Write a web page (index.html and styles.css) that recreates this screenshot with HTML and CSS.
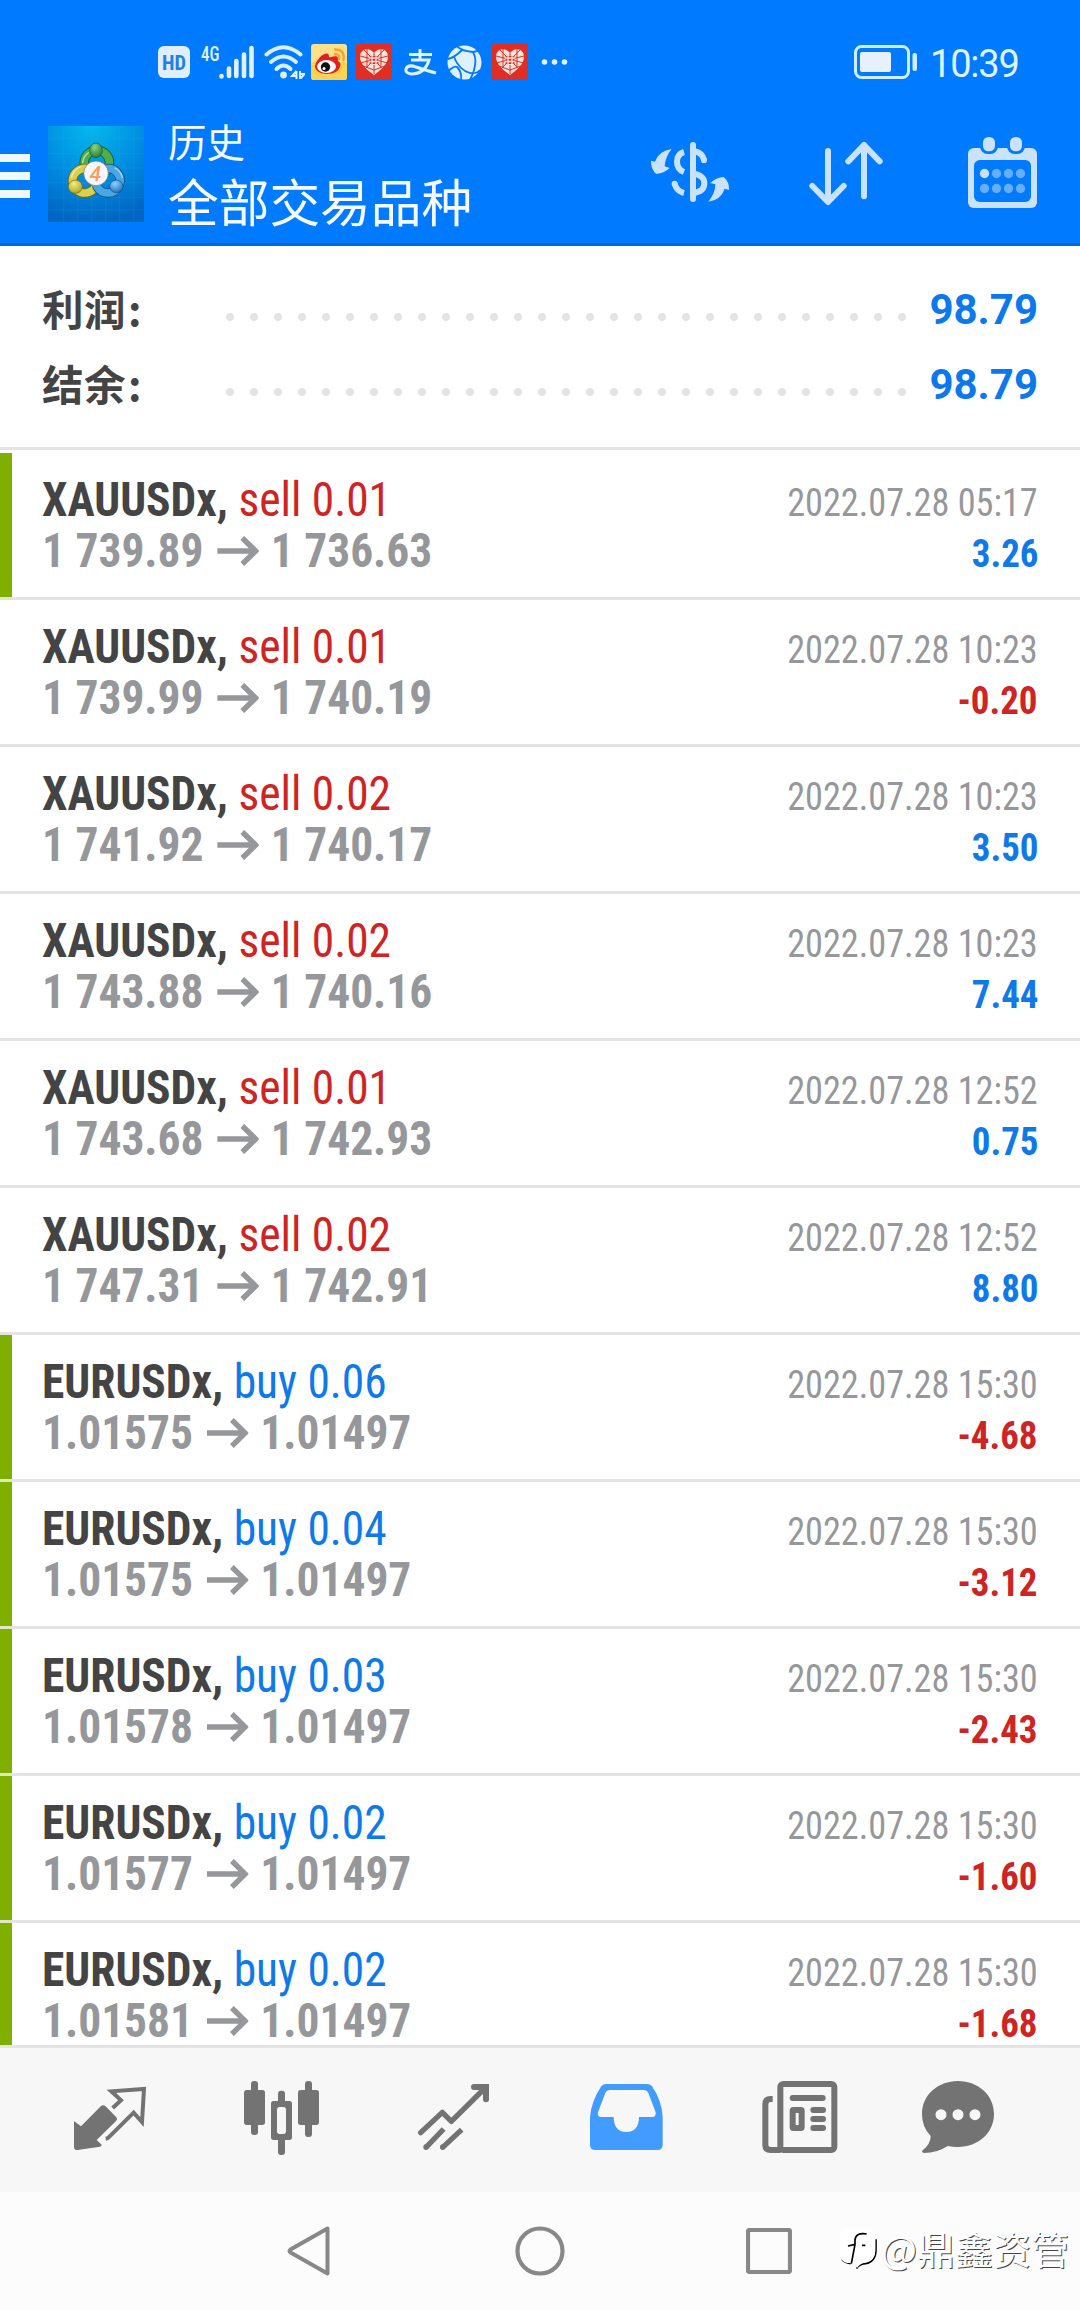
FILE: index.html
```html
<!DOCTYPE html>
<html lang="zh-CN">
<head>
<meta charset="utf-8">
<title>历史</title>
<link rel="stylesheet" href="styles.css">
</head>
<body>
<svg class="defs" width="0" height="0">
  <symbol id="arrow" viewBox="0 0 44 30"><path d="M0 15H40M26.500 2L40.500 15L26.500 28" fill="none" stroke="currentColor" stroke-width="5.700"/></symbol>
  <symbol id="heart" viewBox="0 0 36 36">
    <rect width="36" height="36" rx="2" fill="#e02e24"/>
    <path d="M18 31C11 26 4 20 4 13C4 4 14 3 18 9C22 3 32 4 32 13C32 20 25 26 18 31Z" fill="#fbe3dc"/>
    <path d="M4 12L32 19M32 12L4 19M8 6L27 25M28 6L9 25M11 5V24M25 5V24M18 9V14M18 21V30M7 22L18 26L29 22" fill="none" stroke="#e02e24" stroke-width="1"/>
    <rect x="13.500" y="12" width="9" height="8" fill="#e02e24"/>
    <path d="M13 14H23M13 17.500H23M16 11V20M20 11V20" stroke="#fbe3dc" stroke-width="1.300"/>
  </symbol>
</svg>
<div class="screen">
  <header class="header">
    <div class="status">
      <svg class="st-hd" viewBox="0 0 32 32"><rect width="32" height="32" rx="6" fill="#e0efff"/><text x="16" y="23.500" textLength="24" lengthAdjust="spacingAndGlyphs">HD</text></svg>
      <svg class="st-net" viewBox="0 0 54 34"><text x="0" y="15.500" textLength="18.500" lengthAdjust="spacingAndGlyphs">4G</text><path d="M20.500 31.500v-.5M28 31V23.500M35.300 31V16M43 31V9.500M50.500 31V3" fill="none" stroke="#e0f2ff" stroke-width="4.600" stroke-linecap="round"/></svg>
      <svg class="st-wifi" viewBox="0 0 41 34"><g fill="none" stroke="#d6efff" stroke-width="4" stroke-linecap="round"><path d="M2.500 9.500Q19.500-5 36.500 9.500"/><path d="M7 17Q19.500 6 32 17"/><path d="M12.500 24Q19.500 17 26.500 24"/></g><circle cx="19.500" cy="30" r="3.400" fill="#e0f2ff"/><path d="M32.500 26V34M32.500 26L28 31H33M36 26V34L40.500 29H35" fill="none" stroke="#e0f2ff" stroke-width="2"/></svg>
      <svg class="st-weibo" viewBox="0 0 36 36"><rect width="36" height="36" rx="3" fill="#ffe08a"/><rect y="18" width="36" height="18" rx="3" fill="#ffd34d"/><path d="M4 22C6 14 14 8 17 10C19 12 17 14 20 13C26 11 28 13 27 17C31 19 30 24 25 28C17 32 4 30 4 22Z" fill="#e31f21"/><ellipse cx="15.500" cy="22.500" rx="9.500" ry="6.500" fill="#fff"/><circle cx="14.500" cy="23" r="4.700" fill="#111"/><circle cx="13" cy="24.500" r="1.500" fill="#fff"/><path d="M24 10Q29 10 28 15M24 5.500Q34 5 32.500 16" fill="none" stroke="#f5a531" stroke-width="2.500" stroke-linecap="round"/></svg>
      <svg class="st-heart"><use href="#heart"/></svg>
      <svg class="st-ali" viewBox="0 0 34 28"><path d="M5 6.500H28M16 1V12M7 12H25Q21 26 7 26Q1 25 2 21Q4 16 12 19Q24 23 32 25" fill="none" stroke="#e0f2ff" stroke-width="3"/></svg>
      <svg class="st-globe" viewBox="0 0 35 35"><circle cx="17.500" cy="17.500" r="17" fill="#dff0ff"/><path d="M9 0Q13 6 26 7Q30 7 35 4M15 5Q7 13 1 14M7 12Q12 25 23 28Q30 29 33 25M26 7Q32 17 23 35M0 27Q8 20 10 22Q15 27 14 35" fill="none" stroke="#007aff" stroke-width="1.800"/></svg>
      <svg class="st-heart2"><use href="#heart"/></svg>
      <svg class="st-more" viewBox="0 0 28 6"><g fill="#e0f2ff"><circle cx="3.500" cy="3" r="2.800"/><circle cx="13.500" cy="3" r="2.800"/><circle cx="23.500" cy="3" r="2.800"/></g></svg>
      <svg class="st-batt" viewBox="0 0 64 34"><rect x="1.500" y="1.500" width="53" height="31" rx="6" fill="none" stroke="#cdeeff" stroke-width="3"/><rect x="6" y="7" width="31" height="20" rx="2" fill="#e6f0ff"/><rect x="58.500" y="8" width="4.500" height="18" rx="2" fill="#cdeeff"/></svg>
      <span class="clock">10:39</span>
    </div>
    <div class="appbar">
      <div class="menu"><i></i><i></i><i></i></div>
      <svg class="logo" viewBox="9 12 288 288">
        <defs>
          <radialGradient id="sky" cx=".45" cy="0" r="1"><stop offset="0" stop-color="#04b8ee"/><stop offset=".55" stop-color="#008ce0"/><stop offset="1" stop-color="#0066c2"/></radialGradient>
          <radialGradient id="g" cx=".4" cy=".3" r=".8"><stop offset="0" stop-color="#8fd08a"/><stop offset="1" stop-color="#18781f"/></radialGradient>
          <radialGradient id="y" cx=".4" cy=".3" r=".8"><stop offset="0" stop-color="#f4ee80"/><stop offset="1" stop-color="#a89a16"/></radialGradient>
          <radialGradient id="b" cx=".4" cy=".3" r=".8"><stop offset="0" stop-color="#8fd2fb"/><stop offset="1" stop-color="#1667ae"/></radialGradient>
        </defs>
        <rect x="9" y="12" width="288" height="288" fill="url(#sky)"/>
        <path d="M56 12V300M98 12V300M140 12V300M182 12V300M224 12V300M266 12V300M9 50H297M9 94H297M9 138H297M9 182H297M9 226H297M9 264H297" stroke="#3fb4f0" stroke-opacity=".22" stroke-width="2"/>
        <g fill="none" stroke-linecap="round">
          <path d="M129 150A38 38 0 1 1 184 148" stroke="#155f2a" stroke-width="28"/>
          <path d="M129 150A38 38 0 1 1 184 148" stroke="#4fae4a" stroke-width="23"/>
          <path d="M120 139A37 37 0 1 0 152 194" stroke="#6e6a19" stroke-width="28"/>
          <path d="M120 139A37 37 0 1 0 152 194" stroke="#d9d14b" stroke-width="23"/>
          <path d="M190 139A37 37 0 1 1 156 194" stroke="#104f86" stroke-width="28"/>
          <path d="M190 139A37 37 0 1 1 156 194" stroke="#49a7e4" stroke-width="23"/>
          <path d="M113 122A42 42 0 0 1 130 92M80 165A42 42 0 0 1 106 135M232 166A42 42 0 0 0 210 138" stroke="#fff" stroke-opacity=".6" stroke-width="4"/>
        </g>
        <ellipse cx="153" cy="85" rx="19" ry="22" fill="url(#g)" stroke="#155f2a" stroke-width="2"/>
        <ellipse cx="91" cy="194" rx="21" ry="20" fill="url(#y)" stroke="#6e6a19" stroke-width="2"/>
        <ellipse cx="214" cy="193" rx="20" ry="19" fill="url(#b)" stroke="#104f86" stroke-width="2"/>
        <circle cx="153" cy="154" r="37" fill="#f6f6fa" stroke="#6b6a60" stroke-width="2"/>
        <text x="151" y="177" class="logo-num">4</text>
      </svg>
      <div class="titles"><div class="sub">历史</div><div class="main">全部交易品种</div></div>
      <svg class="ic-dollar" viewBox="90 90 240 204" fill="#c9e2ff">
        <path d="M155 117Q117 122 105 155L93 152Q92 178 109 192Q132 190 149 174L134 169Q136 140 155 117Z"/>
        <path d="M265 275Q303 270 314 236L327 240Q329 217 311 201Q288 203 271 219L286 223Q286 250 265 275Z"/>
        <g fill="none" stroke="#c9e2ff" stroke-width="18"><path d="M219 105V267" stroke-linecap="round"/><path d="M192 126Q171 132 171 155Q171 178 192 186M164 221Q170 243 192 249"/><path d="M164 221V222M252 151V150" stroke-linecap="round"/><path d="M222 123Q248 128 252 151M222 191Q253 197 253 220Q253 244 222 249"/></g>
      </svg>
      <svg class="ic-sort" viewBox="564 90 231 204" fill="none" stroke="#c9e2ff" stroke-width="18" stroke-linecap="round" stroke-linejoin="round"><path d="M624 123V275M577 228L624 276L671 228M732 259V105M685 154L732 105L779 154"/></svg>
      <svg class="ic-cal" viewBox="1041 78 213 228">
        <rect x="1044" y="114" width="207" height="180" rx="17" fill="#c9e2ff"/>
        <rect x="1080" y="72" width="54" height="60" rx="23" fill="#007aff"/><rect x="1161" y="72" width="54" height="60" rx="23" fill="#007aff"/>
        <rect x="1089" y="81" width="36" height="43" rx="16" fill="#c9e2ff"/><rect x="1170" y="81" width="36" height="43" rx="16" fill="#c9e2ff"/>
        <rect x="1062" y="150" width="171" height="126" rx="17" fill="#007aff"/>
        <circle cx="1093.500" cy="190.500" r="14" fill="#c9e2ff"/>
        <g fill="#66afff"><circle cx="1129.500" cy="190.500" r="14"/><circle cx="1165.500" cy="190.500" r="14"/><circle cx="1201.500" cy="190.500" r="14"/><circle cx="1093.500" cy="235.500" r="14"/><circle cx="1129.500" cy="235.500" r="14"/><circle cx="1165.500" cy="235.500" r="14"/><circle cx="1201.500" cy="235.500" r="14"/></g>
      </svg>
    </div>
  </header>

  <section class="summary">
    <div class="sum-row"><span class="label">利润<span class="colon">:</span></span><span class="dots"></span><span class="total">98.79</span></div>
    <div class="sum-row"><span class="label">结余<span class="colon">:</span></span><span class="dots"></span><span class="total">98.79</span></div>
  </section>

  <main class="list">
    <div class="deal marked"><div class="line"><div class="name"><b>XAUUSDx,</b> <span class="sell">sell 0.01</span></div><time>2022.07.28 05:17</time></div><div class="line"><div class="price">1 739.89<svg><use href="#arrow"/></svg>1 736.63</div><span class="pl up">3.26</span></div></div>
    <div class="deal"><div class="line"><div class="name"><b>XAUUSDx,</b> <span class="sell">sell 0.01</span></div><time>2022.07.28 10:23</time></div><div class="line"><div class="price">1 739.99<svg><use href="#arrow"/></svg>1 740.19</div><span class="pl down">-0.20</span></div></div>
    <div class="deal"><div class="line"><div class="name"><b>XAUUSDx,</b> <span class="sell">sell 0.02</span></div><time>2022.07.28 10:23</time></div><div class="line"><div class="price">1 741.92<svg><use href="#arrow"/></svg>1 740.17</div><span class="pl up">3.50</span></div></div>
    <div class="deal"><div class="line"><div class="name"><b>XAUUSDx,</b> <span class="sell">sell 0.02</span></div><time>2022.07.28 10:23</time></div><div class="line"><div class="price">1 743.88<svg><use href="#arrow"/></svg>1 740.16</div><span class="pl up">7.44</span></div></div>
    <div class="deal"><div class="line"><div class="name"><b>XAUUSDx,</b> <span class="sell">sell 0.01</span></div><time>2022.07.28 12:52</time></div><div class="line"><div class="price">1 743.68<svg><use href="#arrow"/></svg>1 742.93</div><span class="pl up">0.75</span></div></div>
    <div class="deal"><div class="line"><div class="name"><b>XAUUSDx,</b> <span class="sell">sell 0.02</span></div><time>2022.07.28 12:52</time></div><div class="line"><div class="price">1 747.31<svg><use href="#arrow"/></svg>1 742.91</div><span class="pl up">8.80</span></div></div>
    <div class="deal marked"><div class="line"><div class="name"><b>EURUSDx,</b> <span class="buy">buy 0.06</span></div><time>2022.07.28 15:30</time></div><div class="line"><div class="price">1.01575<svg><use href="#arrow"/></svg>1.01497</div><span class="pl down">-4.68</span></div></div>
    <div class="deal marked"><div class="line"><div class="name"><b>EURUSDx,</b> <span class="buy">buy 0.04</span></div><time>2022.07.28 15:30</time></div><div class="line"><div class="price">1.01575<svg><use href="#arrow"/></svg>1.01497</div><span class="pl down">-3.12</span></div></div>
    <div class="deal marked"><div class="line"><div class="name"><b>EURUSDx,</b> <span class="buy">buy 0.03</span></div><time>2022.07.28 15:30</time></div><div class="line"><div class="price">1.01578<svg><use href="#arrow"/></svg>1.01497</div><span class="pl down">-2.43</span></div></div>
    <div class="deal marked"><div class="line"><div class="name"><b>EURUSDx,</b> <span class="buy">buy 0.02</span></div><time>2022.07.28 15:30</time></div><div class="line"><div class="price">1.01577<svg><use href="#arrow"/></svg>1.01497</div><span class="pl down">-1.60</span></div></div>
    <div class="deal marked"><div class="line"><div class="name"><b>EURUSDx,</b> <span class="buy">buy 0.02</span></div><time>2022.07.28 15:30</time></div><div class="line"><div class="price">1.01581<svg><use href="#arrow"/></svg>1.01497</div><span class="pl down">-1.68</span></div></div>
  </main>

  <nav class="tabs">
    <svg viewBox="84 114 252 252"><path d="M102 243L123 259L183 198Q189 193 196 198L229 232Q234 237 229 242L170 300L185 314Q185 319 180 320L112 330Q102 330 102 320Z" fill="#737373"/><path d="M218 204L243 181L214 154L312 147L306 246L281 218L206 292Q203 295 197 296" fill="none" stroke="#737373" stroke-width="12"/></svg>
    <svg viewBox="600 114 252 252"><g fill="#737373"><rect x="633" y="123" width="21" height="162" rx="9"/><rect x="612" y="150" width="63" height="105" rx="8"/><rect x="795" y="123" width="21" height="168" rx="9"/><rect x="774" y="150" width="63" height="105" rx="8"/><rect x="714" y="152" width="21" height="193" rx="9"/><rect x="693" y="183" width="63" height="117" rx="8"/></g><rect x="711" y="201" width="27" height="81" rx="8" fill="#f7f7f7"/></svg>
    <svg viewBox="1116 114 252 252" fill="none" stroke="#737373" stroke-width="16"><path d="M1142 278L1207 217L1234 244L1338 141" stroke-linecap="round" stroke-linejoin="round"/><path d="M1302 141H1338V178" stroke-width="18" stroke-linecap="round"/><path d="M1158 322L1211 267M1208 322L1265 269"/><path d="M1158 322V321M1208 322V321" stroke-linecap="round"/></svg>
    <svg viewBox="132 114 252 252"><path d="M200 132H320Q331 132 336 139Q366 183 368 231V314Q368 330 352 330H166Q150 330 150 314V231Q154 183 184 139Q189 132 200 132Z" fill="#429bff"/><path d="M210 150H310Q321 150 325 159L347 217Q349 231 336 231H297Q297 275 259 276Q221 275 221 231H184Q171 231 174 217L196 159Q200 150 210 150Z" fill="#f7f7f7"/></svg>
    <svg viewBox="648 114 252 252" fill="none" stroke="#737373" stroke-width="18"><rect x="721" y="132" width="162" height="198" rx="9"/><path d="M698 177H692Q676 177 676 193V315Q676 330 692 330H722"/><path d="M758 174H848M820 210H849M820 237H849M820 264H849" stroke-linecap="round"/><rect x="758" y="210" width="27" height="54" rx="2"/></svg>
    <svg class="chat" viewBox="1128 114 252 252"><path d="M1254 123C1315 123 1362 166 1362 222C1362 278 1315 321 1254 321Q1238 321 1223 318Q1191 339 1152 339Q1143 337 1148 331Q1172 312 1172 288Q1146 262 1146 222C1146 166 1193 123 1254 123Z" fill="#737373"/><g fill="#f7f7f7"><circle cx="1203" cy="224" r="16.500"/><circle cx="1254" cy="224" r="16.500"/><circle cx="1305" cy="224" r="16.500"/></g></svg>
  </nav>
  <footer class="sysnav">
    <svg class="back" viewBox="0 0 46 54"><path d="M41.500 4.500V49.500L4.500 28.500Q2.500 27 4.500 25.500Z" fill="none" stroke="#888" stroke-width="4" stroke-linejoin="round"/></svg>
    <svg class="home" viewBox="0 0 50 50"><circle cx="25" cy="25" r="22.500" fill="none" stroke="#888" stroke-width="4.200"/></svg>
    <svg class="recent" viewBox="0 0 46 46"><rect x="2" y="2" width="42" height="42" rx="1.500" fill="none" stroke="#888" stroke-width="4.200"/></svg>
    <div class="mark"><svg viewBox="10 45 120 135"><path d="M22 145Q28 155 48 158M66 173Q72 160 92 158Q126 152 124 110V85" fill="none" stroke="#000" stroke-width="5"/><path d="M45 50H95Q122 50 122 80V120Q122 150 90 155Q74 158 67 172L64 156H45Q15 156 15 122V80Q15 50 45 50Z" fill="#fff"/><path d="M96 69Q64 64 61 86V100L50 158M40 105L61 100M82 103H92" fill="none" stroke="#000" stroke-width="5"/></svg><span>@鼎鑫资管</span></div>
  </footer>
</div>
</body>
</html>
```
FILE: styles.css
```css
* { box-sizing: border-box; }
body { margin: 0; background: #fff; font-family: Roboto, "Noto Sans CJK SC", sans-serif; }
svg { display: block; flex: none; }
.defs { position: absolute; }
.screen { width: 1080px; height: 2310px; display: flex; flex-direction: column; overflow: hidden; }

.header { flex: none; height: 246px; background: #007aff; border-bottom: 3px solid #0069da; }
.status { height: 126px; padding: 0 62px 2px 158px; display: flex; align-items: center; }
.status text { font-family: "Roboto Condensed", Roboto, sans-serif; font-weight: 500; }
.st-hd { width: 32px; height: 32px; }
.st-hd text { font-size: 21px; font-weight: 700; fill: #1e80e8; text-anchor: middle; }
.st-net { width: 54px; height: 34px; margin-left: 11px; overflow: visible; }
.st-net text { font-size: 20px; fill: #e0f2ff; }
.st-wifi { width: 41px; height: 34px; margin-left: 9px; }
.st-weibo { width: 36px; height: 36px; margin-left: 6px; }
.st-heart { width: 36px; height: 36px; margin-left: 9px; }
.st-ali { width: 34px; height: 28px; margin-left: 12px; }
.st-globe { width: 35px; height: 35px; margin-left: 9px; }
.st-heart2 { width: 36px; height: 36px; margin-left: 10px; }
.st-more { width: 28px; height: 6px; margin-left: 13px; }
.st-batt { width: 64px; height: 34px; margin-left: auto; }
.clock { width: 88px; margin: 4px 0 0 12px; font-size: 38px; line-height: 46px; letter-spacing: -1.2px; color: #dff3ff; white-space: nowrap; }

.appbar { height: 96px; padding-right: 42px; display: flex; align-items: center; }
.menu { width: 30px; display: flex; flex-direction: column; gap: 10px; margin-top: 4px; }
.menu i { height: 8px; background: #f0f8ff; }
.logo { width: 96px; height: 96px; margin-left: 18px; }
.logo-num { font: italic 500 62px Roboto, sans-serif; fill: #f0a060; text-anchor: middle; }
.titles { margin: 1px auto 0 24px; color: #f4faff; white-space: nowrap; }
.sub { font-size: 38.500px; line-height: 60px; }
.main { font-size: 50.700px; line-height: 62px; }
.ic-dollar { width: 80px; height: 68px; }
.ic-sort { width: 77px; height: 68px; margin-left: 78px; }
.ic-cal { width: 71px; height: 76px; margin-left: 82px; }

.summary { flex: none; height: 204px; padding: 26px 42px 0; border-bottom: 3px solid #e4e4e4; }
.sum-row { height: 75px; display: flex; align-items: center; }
.label { width: 176px; margin-top: -4px; font-family: "Noto Sans CJK SC", sans-serif; font-size: 41.500px; font-weight: 700; letter-spacing: .5px; color: #444; }
.colon { margin-left: 2px; }
.dots { width: 696px; height: 24px; margin-top: 14px; background: radial-gradient(circle at center, #e4e4e4 3.600px, transparent 4.400px) 0 0 / 24px 24px repeat-x; }
.total { margin-left: auto; font-size: 42px; font-weight: 700; color: #0b78ec; }

.list { flex: none; height: 1595px; padding-top: 3px; overflow: hidden; font-family: "Roboto Condensed", Roboto, sans-serif; }
.deal { height: 147px; padding: 21px 42px 0; position: relative; border-bottom: 3px solid #e4e4e4; }
.deal.marked::before { content: ""; position: absolute; left: 0; top: 0; bottom: 0; width: 12px; background: #7fb000; }
.deal.marked::after { content: ""; position: absolute; left: 0; bottom: -3px; width: 12px; height: 3px; background: #dfe8c2; }
.line { height: 51px; line-height: 51px; display: flex; justify-content: space-between; align-items: baseline; font-size: 48px; white-space: nowrap; }
.name, .price { transform: scaleX(.947); transform-origin: left; }
.line b { font-weight: 700; color: #444; }
.sell { color: #cf2424; }
.buy { color: #0f79e8; }
.line time { font-size: 39px; color: #96979b; transform: scaleX(.929); transform-origin: right; }
.price { font-weight: 700; color: #96979b; }
.price svg { display: inline-block; width: 44px; height: 30px; margin: 0 13px 0 14px; vertical-align: 1px; }
.pl { font-size: 39px; font-weight: 700; transform: scaleX(.947); transform-origin: right; }
.up { color: #0f79e8; }
.down { color: #cf2424; }

.tabs { flex: none; height: 147px; padding-left: 68px; display: flex; align-items: center; gap: 88px; background: #f7f7f7; border-top: 3px solid #e4e4e4; }
.tabs svg { width: 84px; height: 84px; }
.tabs .chat { margin-left: -12px; }
.sysnav { flex: none; height: 118px; padding-left: 286px; display: flex; align-items: center; background: #fcfcfc; position: relative; }
.back { width: 46px; height: 54px; }
.home { width: 50px; height: 50px; margin-left: 183px; }
.recent { width: 46px; height: 46px; margin-left: 181px; }
.mark { position: absolute; left: 838px; top: 33px; display: flex; align-items: center; color: #fff; font-size: 38px; line-height: 46px; font-family: "Noto Sans CJK SC", sans-serif; text-shadow: 1px 1px 0 #444; white-space: nowrap; }
.mark svg { width: 40px; height: 45px; margin-right: 3px; }
```
